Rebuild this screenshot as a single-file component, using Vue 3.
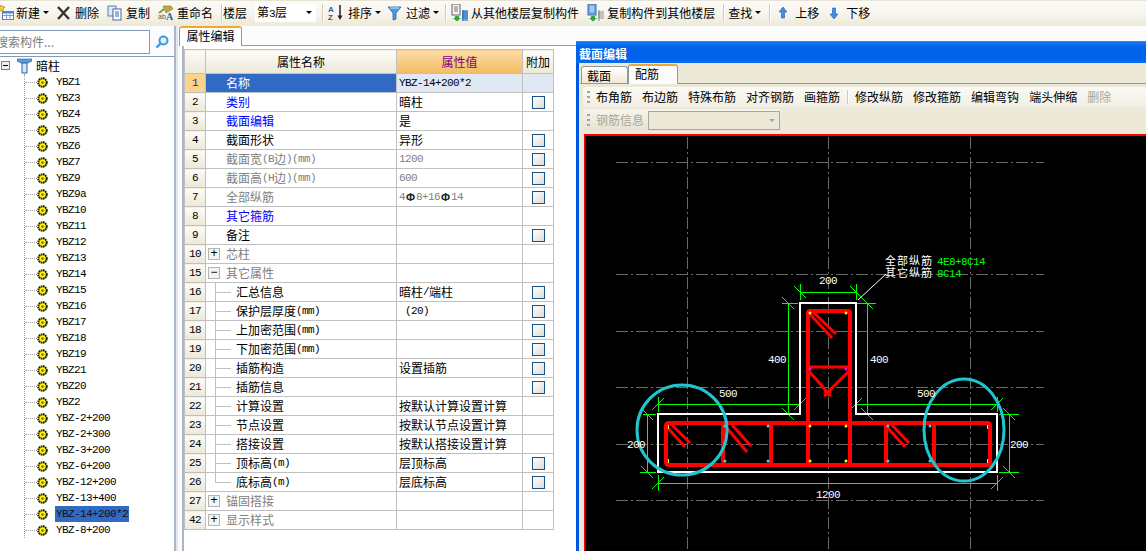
<template>
  <div class="app">
    <div class="toolbar">
      <div class="tool">
        <svg class="ico w16" viewBox="0 0 16 16"><rect x="2.500" y="6.500" width="11" height="8" fill="#fff" stroke="#5a7fb5"/><path d="M3 10.500h10M6.500 9v6M10 9v6" stroke="#7f9fd0"/><rect x="3" y="6" width="10" height="2.500" fill="#4f86d0"/><path d="M1 -1l1 2.500 3 .5-2 2 .5 3L1 5.500-1.500 7l.5-3-2-2 3-.5z" fill="#f6c63c" stroke="#8a6a10" stroke-width=".5"/></svg>
        <span>新建</span><i class="caret"></i>
      </div>
      <div class="tool">
        <svg class="ico w18" viewBox="0 0 18 16"><path d="M1 2l11 12M12 2L1 14" stroke="#333" stroke-width="2.400"/></svg>
        <span>删除</span>
      </div>
      <div class="tool">
        <svg class="ico w19" viewBox="0 0 19 16"><rect x="1" y="1" width="8" height="10" fill="#dfe8f7" stroke="#5b7fae"/><rect x="6" y="4" width="8" height="11" fill="#fff" stroke="#3c68a8"/><path d="M8 7h4M8 9h4M8 11h4" stroke="#3c68a8"/></svg>
        <span>复制</span>
      </div>
      <div class="tool">
        <svg class="ico w19" viewBox="0 0 19 16"><path d="M5 1h8l2 3-7 4z" fill="#c9a53f" stroke="#7d7a3a" stroke-width=".6"/><path d="M1 8l5-4" stroke="#7d9a50" stroke-width="2"/><text x="0" y="14" class="ab">ab</text><text x="8" y="15" class="big-a">A</text></svg>
        <span>重命名</span>
      </div>
      <b class="sep"></b>
      <div class="tool tight"><span>楼层</span></div>
      <div class="combo"><span>第<em class="lat">3</em>层</span><i class="caret"></i></div>
      <b class="sep near"></b>
      <div class="tool">
        <svg class="ico w20" viewBox="0 0 20 18"><text x="0" y="8" class="az-a">A</text><text x="0" y="16" class="az-z">Z</text><path d="M12 1v13" stroke="#222" stroke-width="1.500"/><path d="M9.500 11.500L12 16l2.500-4.500z" fill="#222"/></svg>
        <span>排序</span><i class="caret"></i>
      </div>
      <div class="tool pull">
        <svg class="ico w19" viewBox="0 0 19 16"><path d="M1 2h13L9 8v6l-3 1V8z" fill="#4a9be0" stroke="#2566a8" stroke-width=".8"/><path d="M3 3h9" stroke="#cfe8fb"/></svg>
        <span>过滤</span><i class="caret"></i>
      </div>
      <b class="sep near"></b>
      <div class="tool">
        <svg class="ico w20" viewBox="0 0 20 18"><rect x="1" y="0" width="8" height="11" fill="#f2f2f2" stroke="#666"/><path d="M3 3h4M3 5h4M3 7h4" stroke="#777"/><path d="M4 12h4v2h2l-4 3.500L2 14h2z" fill="#2da844"/><path d="M11 6h6v11h-6z" fill="#6fa8dc"/><path d="M12 6v11M11 8h6M11 10h6M11 12h6M11 14h6" stroke="#1f5c9c" stroke-width=".7"/></svg>
        <span>从其他楼层复制构件</span>
      </div>
      <div class="tool">
        <svg class="ico w20" viewBox="0 0 20 18"><rect x="1" y="0" width="8" height="11" fill="#6fa8dc" stroke="#3a6ea8"/><path d="M3 3h4M3 5h4M3 7h4" stroke="#e6f0fa"/><path d="M4 12h4v2h2l-4 3.500L2 14h2z" fill="#2da844"/><path d="M11 6h6v11h-6z" fill="#f2f2f2"/><path d="M12 6v11M11 8h6M11 10h6M11 12h6M11 14h6" stroke="#666" stroke-width=".7"/></svg>
        <span>复制构件到其他楼层</span>
      </div>
      <b class="sep"></b>
      <div class="tool pull"><span>查找</span><i class="caret"></i></div>
      <b class="sep wide"></b>
      <div class="tool">
        <svg class="ico w17" viewBox="0 0 17 16"><path d="M5 2L1 7h2.500v6h3V7H9z" fill="#3f8fe0" stroke="#1f5fa8" stroke-width=".6"/></svg>
        <span>上移</span>
      </div>
      <div class="tool gap2">
        <svg class="ico w17" viewBox="0 0 17 16"><path d="M5 14L1 9h2.500V3h3v6H9z" fill="#3f8fe0" stroke="#1f5fa8" stroke-width=".6"/></svg>
        <span>下移</span>
      </div>
    </div>

    <div class="main">
      <aside class="left">
        <div class="search">
          <div class="search-box">搜索构件...</div>
          <svg class="search-ico" viewBox="0 0 14 14"><circle cx="8.500" cy="5.500" r="4" fill="#e4f2fc" stroke="#3d9ad8" stroke-width="2"/><path d="M5.500 8.500L1.500 12.500" stroke="#3d9ad8" stroke-width="2.400"/></svg>
        </div>
        <div class="tree">
          <div class="tree-root">
            <span class="minus-small"></span>
            <svg class="root-ico" viewBox="0 0 15 16"><path d="M0 1h15v2l-4 2H4L0 3z" fill="#5c9be0" stroke="#245f9f" stroke-width=".6"/><path d="M5 5h5v10H5z" fill="#d6e6f7" stroke="#245f9f"/></svg>
            <span>暗柱</span>
          </div>
          <div class="tree-list">
            <div v-for="name in members" :key="name" class="tree-row">
              <svg class="gear" viewBox="0 0 11 11"><circle cx="5.500" cy="5.500" r="4.200" fill="#ffff00" stroke="#111" stroke-width="2" stroke-dasharray="1.600 .6"/><circle cx="5.500" cy="5.500" r="1.300" fill="#8a5a00"/></svg>
              <span class="tree-name" :class="{ selected: name === 'YBZ-14+200*2' }">{{ name }}</span>
            </div>
          </div>
        </div>
      </aside>
      <div class="splitter"></div>

      <section class="right">
        <div class="tabs"><div class="tab">属性编辑</div></div>
        <div class="panel">
          <table class="grid">
            <colgroup><col class="c0"><col class="c1"><col class="c2"><col class="c3"></colgroup>
            <thead>
              <tr><th class="corner"></th><th>属性名称</th><th class="hot">属性值</th><th>附加</th></tr>
            </thead>
            <tbody>
              <tr v-for="row in rows" :key="row.no" :class="{ sel: row.no === 1 }">
                <td class="no">{{ row.no }}</td>
                <td class="name" :class="[row.kind, { sub: row.sub, last: row.no === 26 }]">
                  <div class="cell">
                    <span v-if="row.open" class="box">{{ row.open }}</span>
                    <span v-for="(r, i) in runs(row.name)" :key="i" :class="{ lat: r.lat }">{{ r.text }}</span>
                  </div>
                </td>
                <td class="val" :class="{ dim: row.dimVal }">
                  <div class="cell">
                    <template v-if="row.no === 7"><span class="lat">4</span><b class="bar">Φ</b><span class="lat">8+16</span><b class="bar">Φ</b><span class="lat">14</span></template>
                    <template v-else><span v-for="(r, i) in runs(row.val)" :key="i" :class="{ lat: r.lat }">{{ r.text }}</span></template>
                  </div>
                </td>
                <td class="add"><div class="cell center"><span v-if="row.check" class="chk"></span></div></td>
              </tr>
            </tbody>
          </table>
        </div>
      </section>
    </div>

    <div class="win">
      <div class="win-title">截面编辑</div>
      <div class="win-body">
        <div class="win-tabs">
          <div class="wtab">截面</div>
          <div class="wtab on">配筋</div>
        </div>
        <div class="win-panel">
          <div class="bar1">
            <i class="grip"></i>
            <span>布角筋</span><span>布边筋</span><span>特殊布筋</span><span>对齐钢筋</span><span>画箍筋</span>
            <b class="sep"></b>
            <span>修改纵筋</span><span>修改箍筋</span><span>编辑弯钩</span><span>端头伸缩</span><span class="off">删除</span>
          </div>
          <div class="bar2">
            <i class="grip"></i>
            <span class="off">钢筋信息</span>
            <div class="dis-combo"><i class="caret grey"></i></div>
          </div>
          <svg class="canvas" viewBox="584 134 562 417">
            <rect x="584" y="134" width="562" height="417" fill="#000"/>
            <path d="M584 135H1146M584.500 134V551" stroke="#f00" stroke-width="2"/>
            <g stroke="#6a6a6a" stroke-dasharray="12 3 2 3" fill="none">
              <path d="M687.500 137V551M828.500 137V551M970.500 137V551"/>
              <path d="M616 162.500H1044M616 274.500H1044M616 331.500H1044M616 387.500H1044M616 444.500H1044M616 500.500H1044"/>
            </g>
            <g stroke="#00ff00" fill="none">
              <path d="M800.500 284V300M856.500 284V300M800 292.500H856M794 286l12 12M850 286l12 12"/>
              <path d="M788.500 303V414M782 303.500H798M782 414.500H798M782 297l12 12M782 408l12 12"/>
              <path d="M867.500 303V414M857 303.500H876M857 414.500H876M861 297l12 12M861 408l12 12"/>
              <path d="M658 404.500H800M658.500 397V412M800.500 397V412M652 410l12-12M794 410l12-12"/>
              <path d="M856 404.500H997M856.500 397V412M997.500 397V412M850 410l12-12M991 410l12-12"/>
              <path d="M647.500 414V472M643 414.500H656M640 472.500H656M641 408l12 12M641 466l12 12"/>
              <path d="M1009.500 414V472M999 414.500H1019M999 472.500H1019M1003 408l12 12M1003 466l12 12"/>
              <path d="M658 483.500H997M658.500 475V491M997.500 475V491M652 489l12-12M991 489l12-12"/>
            </g>
            <path d="M858 300L886 274" stroke="#fff"/>
            <path d="M800 303H856V414H997V472H658V414H800Z" fill="none" stroke="#fff" stroke-width="2"/>
            <g stroke="#f00" stroke-width="4" fill="none">
              <path d="M669 423H987Q990 423 990 426V462Q990 465 987 465H669Q666 465 666 462V426Q666 423 669 423Z"/>
              <path d="M808 465V313Q808 311 810 311H848Q850 311 850 313V465"/>
              <path d="M723 423V465M771 423V465M886 423V465M934 423V465"/>
            </g>
            <g stroke="#f00" stroke-width="3" fill="none">
              <path d="M808 367H850M808 370L829 394M850 370L826 394M824 391l7 5M824 396l7-5"/>
              <path d="M808 312L832 338M813 312L836 334"/>
              <path d="M667 427L685 447M670 423L690 443"/>
              <path d="M726 427L747 452M732 425L751 446"/>
              <path d="M887 427L905 447M890 423L909 443"/>
            </g>
            <g fill="#ffff00">
              <circle cx="810" cy="313" r="1.500"/><circle cx="846" cy="313" r="1.500"/>
              <circle cx="810" cy="426" r="1.500"/><circle cx="846" cy="426" r="1.500"/>
              <circle cx="810" cy="461" r="1.500"/><circle cx="846" cy="461" r="1.500"/>
              <rect x="668" y="425" width="1" height="4"/><rect x="668" y="459" width="1" height="4"/>
              <rect x="987" y="425" width="1" height="4"/><rect x="987" y="459" width="1" height="4"/>
            </g>
            <g fill="#ff00ff"><circle cx="810" cy="369" r="1.500"/><circle cx="846" cy="369" r="1.500"/></g>
            <g fill="#22ddee">
              <circle cx="725" cy="426" r="1.500"/><circle cx="768" cy="426" r="1.500"/><circle cx="888" cy="426" r="1.500"/><circle cx="930" cy="426" r="1.500"/>
              <circle cx="725" cy="461" r="1.500"/><circle cx="768" cy="461" r="1.500"/><circle cx="888" cy="461" r="1.500"/><circle cx="930" cy="461" r="1.500"/>
            </g>
            <g fill="none" stroke="#1fc6cf" stroke-width="3">
              <ellipse cx="682" cy="430" rx="45" ry="45"/>
              <ellipse cx="964" cy="430" rx="40" ry="51"/>
            </g>
            <g class="dim-text">
              <text x="819" y="284">200</text><text x="768" y="363">400</text><text x="870" y="363">400</text>
              <text x="719" y="397">500</text><text x="917" y="397">500</text><text x="627" y="448">200</text>
              <text x="1010" y="448">200</text><text x="816" y="498">1200</text>
            </g>
            <text x="885" y="265" class="cjk-label">全部纵筋</text>
            <text x="885" y="277" class="cjk-label">其它纵筋</text>
            <text x="937" y="265" class="green-label">4E8+8C14</text>
            <text x="937" y="277" class="green-label">8C14</text>
          </svg>
        </div>
      </div>
    </div>
  </div>
</template>

<script setup>
const members = [
  'YBZ1', 'YBZ3', 'YBZ4', 'YBZ5', 'YBZ6', 'YBZ7', 'YBZ9', 'YBZ9a', 'YBZ10', 'YBZ11',
  'YBZ12', 'YBZ13', 'YBZ14', 'YBZ15', 'YBZ16', 'YBZ17', 'YBZ18', 'YBZ19', 'YBZ21', 'YBZ20',
  'YBZ2', 'YBZ-2+200', 'YBZ-2+300', 'YBZ-3+200', 'YBZ-6+200', 'YBZ-12+200', 'YBZ-13+400',
  'YBZ-14+200*2', 'YBZ-8+200',
]

const rows = [
  { no: 1, name: '名称', val: 'YBZ-14+200*2' },
  { no: 2, name: '类别', val: '暗柱', kind: 'blue', check: true },
  { no: 3, name: '截面编辑', val: '是', kind: 'blue' },
  { no: 4, name: '截面形状', val: '异形', check: true },
  { no: 5, name: '截面宽(B边)(mm)', val: '1200', kind: 'grey', dimVal: true, check: true },
  { no: 6, name: '截面高(H边)(mm)', val: '600', kind: 'grey', dimVal: true, check: true },
  { no: 7, name: '全部纵筋', val: '', kind: 'grey', dimVal: true, check: true },
  { no: 8, name: '其它箍筋', val: '', kind: 'blue' },
  { no: 9, name: '备注', val: '', check: true },
  { no: 10, name: '芯柱', val: '', kind: 'grey', open: '+' },
  { no: 15, name: '其它属性', val: '', kind: 'grey', open: '−' },
  { no: 16, name: '汇总信息', val: '暗柱/端柱', sub: true, check: true },
  { no: 17, name: '保护层厚度(mm)', val: ' (20)', sub: true, check: true },
  { no: 18, name: '上加密范围(mm)', val: '', sub: true, check: true },
  { no: 19, name: '下加密范围(mm)', val: '', sub: true, check: true },
  { no: 20, name: '插筋构造', val: '设置插筋', sub: true, check: true },
  { no: 21, name: '插筋信息', val: '', sub: true, check: true },
  { no: 22, name: '计算设置', val: '按默认计算设置计算', sub: true },
  { no: 23, name: '节点设置', val: '按默认节点设置计算', sub: true },
  { no: 24, name: '搭接设置', val: '按默认搭接设置计算', sub: true },
  { no: 25, name: '顶标高(m)', val: '层顶标高', sub: true, check: true },
  { no: 26, name: '底标高(m)', val: '层底标高', sub: true, check: true },
  { no: 27, name: '锚固搭接', val: '', kind: 'grey', open: '+' },
  { no: 42, name: '显示样式', val: '', kind: 'grey', open: '+' },
]

// latin runs are set smaller so they come out 6px wide next to 12px CJK
const runs = (text) =>
  (text.match(/[\x00-\x7f]+|[^\x00-\x7f]+/g) || []).map((t) => ({ text: t, lat: t.charCodeAt(0) < 128 }))
</script>

<style>
html, body { margin: 0; height: 100%; overflow: hidden; background: #fcfcff; }
</style>

<style scoped>
.app {
  position: relative;
  height: 551px;
  width: 1146px;
  overflow: hidden;
  font-family: "Noto Sans CJK SC", "Liberation Sans", sans-serif;
  font-size: 12px;
  line-height: 14px;
  color: #000;
  background: #fcfcff;
}
.lat {
  font-family: "Liberation Mono", monospace;
  font-size: 11px;
  letter-spacing: -.6px;
  font-style: normal;
  white-space: pre;
}

/* toolbar */
.toolbar {
  display: flex;
  align-items: center;
  gap: 8px;
  height: 26px;
  box-sizing: border-box;
  border-top: 1px solid #e6e2d4;
  padding-bottom: 2px;
  background: linear-gradient(#fbfaf6, #f7f5ee 50%, #ece9d8);
  white-space: nowrap;
}
.tool { display: flex; align-items: center; }
.pull { margin-left: -2px; }
.gap2 { margin-left: 2px; }
.tight { margin-left: -5px; }
.ico { height: 16px; flex: none; }
.w16 { width: 16px; }
.w17 { width: 17px; }
.w18 { width: 18px; }
.w19 { width: 19px; }
.w20 { width: 20px; height: 18px; }
.caret {
  display: inline-block;
  width: 0;
  height: 0;
  margin-left: 3px;
  border-left: 3px solid transparent;
  border-right: 3px solid transparent;
  border-top: 3px solid #000;
}
.caret.grey { border-top-color: #a8a698; }
.sep {
  width: 1px;
  height: 18px;
  background: #cfccbc;
  box-shadow: 1px 0 0 #fff;
  margin-right: -2px;
}
.sep.near { margin-left: -2px; margin-right: -3px; }
.sep.wide { margin-right: 0; }
.combo {
  display: flex;
  align-items: center;
  justify-content: space-between;
  width: 61px;
  height: 18px;
  box-sizing: border-box;
  padding: 0 4px 0 2px;
  background: #fff;
}
.ab { font: 7px "Liberation Sans", sans-serif; fill: #556; }
.big-a { font: bold 10px "Liberation Serif", serif; fill: #2a5ea8; }
.az-a { font: bold 8px "Liberation Sans", sans-serif; fill: #2a5ea8; }
.az-z { font: bold 8px "Liberation Sans", sans-serif; fill: #a83030; }

/* main split */
.main { display: flex; height: 525px; }
.left { width: 174px; flex: none; display: flex; flex-direction: column; }
.search { display: flex; align-items: center; height: 30px; box-sizing: border-box; padding-top: 1px; }
.search-box {
  width: 150px;
  height: 24px;
  box-sizing: border-box;
  border: 1px solid #7f9db9;
  border-left: none;
  background: #fff;
  color: #7d7d7d;
  line-height: 22px;
  text-indent: -4px;
  overflow: hidden;
  white-space: nowrap;
}
.search-ico { width: 14px; height: 14px; margin-left: 5px; }
.tree { flex: 1; border-top: 1px solid #7f9db9; background: #fff; }
.tree-root { display: flex; align-items: center; height: 17px; padding-left: 1px; }
.minus-small {
  position: relative;
  width: 9px;
  height: 9px;
  box-sizing: border-box;
  border: 1px solid #808080;
  background: #f0f0f0;
}
.minus-small::after { content: ""; position: absolute; left: 1px; right: 1px; top: 3px; height: 1px; background: #000; }
.root-ico { width: 15px; height: 16px; margin: 0 4px 0 7px; }
.tree-list { margin-left: 24px; border-left: 1px dotted #a0a0a0; margin-bottom: 8px; }
.tree-row { display: flex; align-items: center; height: 16px; padding-left: 12px; position: relative; }
.tree-row::before { content: ""; position: absolute; left: 0; width: 12px; top: 8px; border-top: 1px dotted #a0a0a0; }
.gear { width: 11px; height: 11px; flex: none; }
.tree-name {
  margin-left: 7px;
  padding: 0 1px;
  font-family: "Liberation Mono", monospace;
  font-size: 11px;
  letter-spacing: -.6px;
  line-height: 16px;
}
.tree-name.selected { background: #316ac5; color: #111; }

.splitter {
  width: 4px;
  flex: none;
  box-sizing: border-box;
  background: #e2e6ee;
  border-left: 2px solid #a9b7c9;
}

.right { flex: 1; display: flex; flex-direction: column; }
.tabs { height: 19px; padding-left: 1px; box-sizing: border-box; }
.tab {
  width: 63px;
  height: 20px;
  box-sizing: border-box;
  border: 1px solid #8a9bab;
  border-top: 2px solid #f0a830;
  border-bottom: none;
  border-radius: 3px 3px 0 0;
  background: #fff;
  text-align: center;
  position: relative;
  line-height: 15px;
}
.panel {
  flex: 1;
  border-top: 1px solid #8a9bab;
  margin-left: 4px;
  border-left: 2px solid #a9b7c9;
  background: #fff;
  padding-top: 3px;
}

/* property grid */
.grid {
  border-collapse: collapse;
  table-layout: fixed;
  width: 369px;
}
.c0 { width: 21px; }
.c1 { width: 191px; }
.c2 { width: 126px; }
.c3 { width: 31px; }
.grid th, .grid td {
  border: 1px solid #c0c0c0;
  padding: 0;
  overflow: hidden;
  white-space: nowrap;
}
.grid th {
  height: 23px;
  font-weight: 400;
  background: linear-gradient(#fdfcf9, #ece9d8);
}
.grid th.hot { background: linear-gradient(#fbdca8, #f4bc60); color: #800080; }
.grid td { height: 18px; line-height: 18px; }
.cell { display: flex; align-items: center; height: 18px; overflow: hidden; white-space: nowrap; }
.center { justify-content: center; }
.name .cell { overflow: visible; }
.no {
  text-align: center;
  font-family: "Liberation Mono", monospace;
  font-size: 11px;
  letter-spacing: -.6px;
  background: linear-gradient(#fcfbf7, #ece9d8);
}
.name { padding-left: 20px !important; position: relative; }
.name.blue { color: #0000ff; }
.name.grey { color: #808080; }
.name.sub { padding-left: 30px !important; }
.name.sub::before {
  content: "";
  position: absolute;
  left: 9px;
  top: -1px;
  bottom: -1px;
  border-left: 1px solid #c0c0c0;
}
.name.sub.last::before { bottom: 9px; }
.name.sub::after {
  content: "";
  position: absolute;
  left: 9px;
  width: 16px;
  top: 9px;
  border-top: 1px solid #c0c0c0;
}
.box {
  flex: none;
  width: 12px;
  height: 12px;
  box-sizing: border-box;
  margin: 0 6px 0 -18px;
  border: 1px solid #b4b4b4;
  background: #f3f3f0;
  color: #000;
  text-align: center;
  line-height: 9px;
  font-family: "Liberation Sans", sans-serif;
}
.val { padding-left: 2px !important; }
.val.dim { color: #808080; }
.bar { font-family: "Liberation Sans", sans-serif; font-size: 11px; font-weight: 700; color: #222; margin: 0 1px; }
.chk {
  width: 13px;
  height: 13px;
  box-sizing: border-box;
  border: 1px solid #1c5180;
  background: linear-gradient(135deg, #ecebe4, #fff 0%, #dcdcd7);
}
.sel .no { background: #fbd38d; color: #6a0a6a; }
.sel .name { background: #316ac5; color: #fff; }
.sel .val, .sel .add { background: #e0e8f4; }

/* floating window */
.win {
  position: absolute;
  left: 576px;
  top: 41px;
  right: 0;
  bottom: 0;
  display: flex;
  flex-direction: column;
  box-sizing: border-box;
  border-left: 3px solid #0058e0;
  background: #0062e8;
}
.win-title {
  height: 22px;
  flex: none;
  margin-left: -3px;
  padding-left: 3px;
  border-top: 1px solid #3a80e0;
  box-sizing: border-box;
  background: linear-gradient(#1a78f0 0, #0062e8 25%, #0062e8 80%, #0a6cf0);
  color: #fff;
  font-weight: 700;
  line-height: 24px;
}
.win-body { flex: 1; background: #ece9d8; padding-left: 1px; display: flex; flex-direction: column; min-height: 0; }
.win-tabs { display: flex; align-items: flex-end; height: 20px; padding-left: 1px; flex: none; }
.wtab {
  width: 47px;
  height: 17px;
  box-sizing: border-box;
  padding-left: 5px;
  border: 1px solid #919b9c;
  border-bottom: none;
  border-radius: 3px 3px 0 0;
  background: linear-gradient(#fff, #ece9d8);
  line-height: 18px;
}
.wtab.on {
  width: 50px;
  height: 20px;
  padding-left: 6px;
  border-top: 2px solid #f0a830;
  background: #fcfcfc;
  line-height: 15px;
  margin-bottom: -1px;
  position: relative;
}
.win-panel {
  flex: 1;
  min-height: 0;
  border-top: 1px solid #919b9c;
  padding: 3px 0 0 3px;
  display: flex;
  flex-direction: column;
  background: #ece9d8;
}
.bar1 {
  display: flex;
  align-items: center;
  gap: 10px;
  height: 20px;
  flex: none;
  padding-left: 4px;
  border-radius: 3px;
  background: linear-gradient(#faf9f4, #f1efe4);
  white-space: nowrap;
}
.bar1 .sep { margin: 0 -3px; height: 14px; }
.bar1 .grip { margin-right: -4px; }
.grip {
  display: block;
  width: 3px;
  height: 12px;
  background: repeating-linear-gradient(#a8a698 0 2px, transparent 2px 5px);
}
.off { color: #a8a698; }
.bar2 {
  display: flex;
  align-items: center;
  gap: 3px;
  width: 198px;
  height: 22px;
  flex: none;
  margin-top: 2px;
  padding-left: 4px;
  box-sizing: border-box;
  border-radius: 3px;
  background: linear-gradient(#f6f5ee, #e6e3d2);
  white-space: nowrap;
}
.bar2 .off { margin-left: 3px; margin-right: 1px; }
.dis-combo {
  display: flex;
  align-items: center;
  justify-content: flex-end;
  width: 132px;
  height: 19px;
  box-sizing: border-box;
  padding-right: 4px;
  border: 1px solid #a8a698;
  background: #ece9d8;
}
.canvas { display: block; flex: none; width: 562px; height: 417px; margin: 3px 0 0 1px; }
.dim-text text { font: 11px "Liberation Mono", monospace; letter-spacing: -.6px; fill: #fff; }
.cjk-label { font: 11px "Noto Sans CJK SC", sans-serif; letter-spacing: 1px; fill: #fff; }
.green-label { font: 11px "Liberation Mono", monospace; letter-spacing: -.6px; fill: #00ff00; }
</style>
